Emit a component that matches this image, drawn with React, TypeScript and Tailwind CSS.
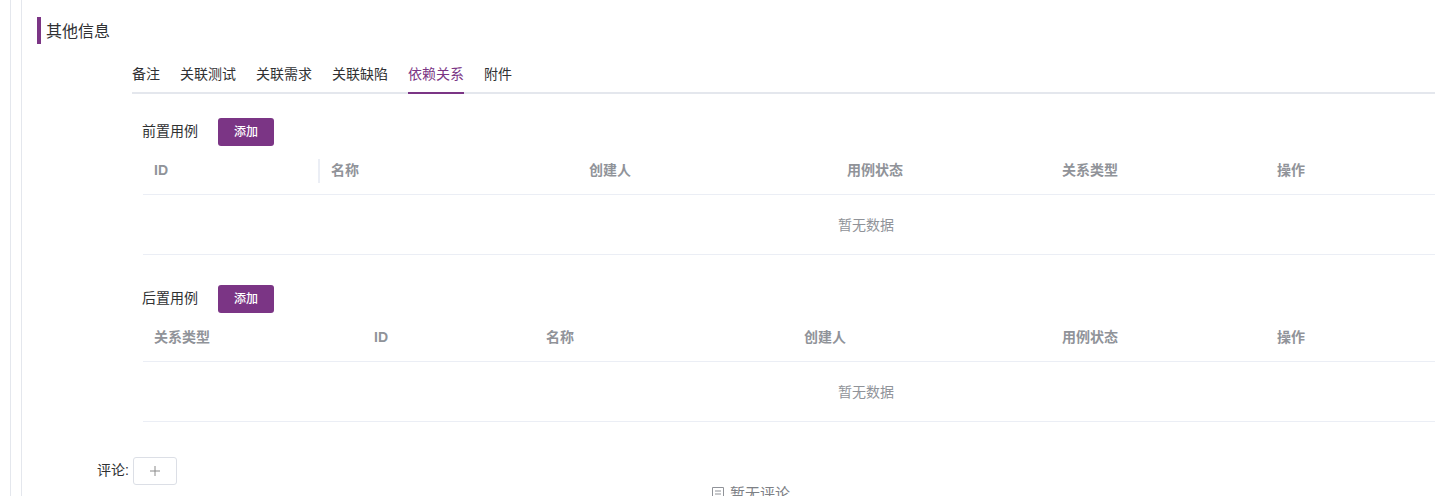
const sans = "[font-family:'Liberation_Sans','Noto_Sans_CJK_SC',sans-serif]";

const tabs = ["备注", "关联测试", "关联需求", "关联缺陷", "依赖关系", "附件"];

type Col = { label: string; width: string; divider?: boolean };

const preCols: Col[] = [
  { label: "ID", width: "w-[177px]", divider: true },
  { label: "名称", width: "w-[258px]" },
  { label: "创建人", width: "w-[258px]" },
  { label: "用例状态", width: "w-[215px]" },
  { label: "关系类型", width: "w-[215px]" },
  { label: "操作", width: "flex-1" },
];

const postCols: Col[] = [
  { label: "关系类型", width: "w-[220px]" },
  { label: "ID", width: "w-[172px]" },
  { label: "名称", width: "w-[258px]" },
  { label: "创建人", width: "w-[258px]" },
  { label: "用例状态", width: "w-[215px]" },
  { label: "操作", width: "flex-1" },
];

function CaseTable({ title, cols }: { title: string; cols: Col[] }) {
  return (
    <section>
      <div className="flex h-[28px] items-start pl-[10px]">
        <span className="w-[76px] text-[14px] leading-[26px] text-[#303133]">{title}</span>
        <button className="h-[28px] w-[56px] rounded-[3px] bg-[#7b3585] text-[12px] font-medium text-white">添加</button>
      </div>
      {/* the real table runs past the window, so the empty text centres further right */}
      <div className="ml-[11px] w-[1446px]">
        <div className="flex h-[49px] items-center border-b border-[#ebeef5]">
          {cols.map((c) => (
            <div key={c.label} className={`${c.width} relative pl-[11px] text-[14px] font-bold text-[#909399]`}>
              {c.label}
              {c.divider && <span className="absolute top-[-1px] right-0 h-[24px] w-[2px] bg-[#ebeef5]" />}
            </div>
          ))}
        </div>
        <div className="flex h-[60px] items-center justify-center border-b border-[#ebeef5] pt-[1px] text-[14px] text-[#909399]">
          暂无数据
        </div>
      </div>
    </section>
  );
}

export default function App() {
  return (
    <div className={`h-[496px] w-full overflow-hidden bg-white ${sans}`}>
      <div className="ml-[10px] h-full border-l border-[#e4e7ed] pl-[10px]">
        <div className="h-full overflow-hidden border-l border-[#e4e7ed] pt-[17px] pl-[15px]">
          <div className="flex h-[27px] items-center border-l-4 border-[#7b3585] pt-[2px] pl-[5px] text-[16px] text-[#303133]">
            其他信息
          </div>

          <div className="mt-[14px] ml-[95px]">
            <div className="flex h-[36px] gap-[20px] border-b-2 border-[#e4e7ed]">
              {tabs.map((t) => (
                <div
                  key={t}
                  className={
                    t === "依赖关系"
                      ? "mb-[-2px] h-[36px] border-b-2 border-[#7b3585] text-[14px] leading-[32px] text-[#7b3585]"
                      : "h-[36px] text-[14px] leading-[32px] text-[#303133]"
                  }
                >
                  {t}
                </div>
              ))}
            </div>

            <div className="mt-[24px] flex flex-col gap-[30px]">
              <CaseTable title="前置用例" cols={preCols} />
              <CaseTable title="后置用例" cols={postCols} />
            </div>
          </div>

          <div className="mt-[35px] flex items-start">
            <span className="w-[96px] pr-[4px] text-right text-[14px] leading-[26px] text-[#303133]">评论:</span>
            <div className="flex h-[28px] w-[44px] items-center justify-center rounded-[3px] border border-[#dcdfe6]">
              <svg width="12" height="12" viewBox="0 0 12 12" stroke="#8a8a8a" strokeWidth="1">
                <path d="M6 1v10M1 6h10" />
              </svg>
            </div>
          </div>

          <div className="mt-[-2px] mr-[66px] ml-[96px] flex items-center justify-center gap-[6px] text-[15px] text-[#7d8085]">
            <svg width="12" height="14" viewBox="0 0 12 14" fill="none" stroke="#909399" strokeWidth="1">
              <path d="M.5.5h11v13H.5zM3 4h6M3 7h6M3 10h6" />
            </svg>
            暂无评论
          </div>
        </div>
      </div>
    </div>
  );
}
